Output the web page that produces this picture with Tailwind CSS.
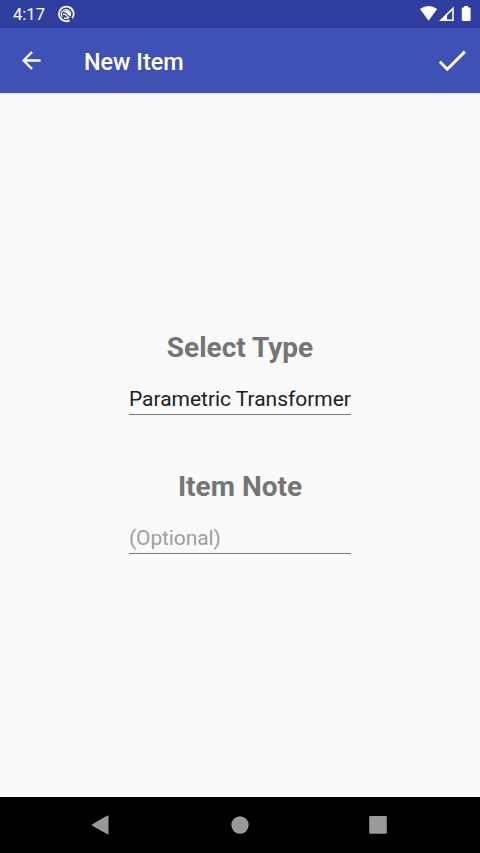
<!DOCTYPE html>
<html lang="en">
<head>
<meta charset="utf-8">
<title>New Item</title>
<script src="https://cdn.jsdelivr.net/npm/@tailwindcss/browser@4"></script>
</head>
<body class="flex h-[853px] w-[480px] flex-col overflow-hidden bg-[#fafafa] font-['Roboto',sans-serif]">
  <div class="flex h-7 shrink-0 items-center bg-[#303f9f] pl-[13px] text-white">
    <span class="w-[44px] pt-[2px] text-[16.6px] leading-7 whitespace-nowrap">4:17</span>
    <svg class="h-[18px] w-[18px]" viewBox="0 0 18 18" fill="none" stroke="#fff">
      <path d="M15.2 13.2A7.3 7.3 0 1 0 12.6 15.4" stroke-width="1.8"/>
      <path d="M5.4 11.9A4.5 4.5 0 1 1 13 11.2" stroke-width="1.1"/>
      <path d="M6 7.2Q9.2 3.4 12.4 7.2Q14 9.3 12.7 11.4L9.6 8Q7.6 6.6 6 7.2Z" fill="#fff" stroke="none"/>
      <path d="M5.9 9.3L8 9.1L11.6 12.6Q9.4 14 6.9 12.8" stroke-width="1.3"/>
    </svg>
    <svg class="mr-[8px] ml-auto h-7 w-[54px]" viewBox="418 0 54 28" fill="#fff">
      <path d="M420 9.1Q428.6 3.1 437.2 9.1L428.6 20.7Z"/>
      <path fill-rule="evenodd" d="M439 21L453.7 6.5V21ZM447 19.4H452.2V10.4L447 15.6Z"/>
      <path d="M461.8 8.5Q461.8 7.6 462.7 7.6H464.2V6H468V7.6H469.8Q470.6 7.6 470.6 8.5V20Q470.6 21 469.8 21H462.7Q461.8 21 461.8 20Z"/>
    </svg>
  </div>
  <header class="flex h-[66px] shrink-0 items-center border-b border-[#d8dbf0] bg-[#3f51b5] text-white">
    <svg class="ml-[17px] h-7 w-7" viewBox="-0.2 0.4 24 24" fill="#fff"><path d="M20 11H7.83l5.59-5.59L12 4l-8 8 8 8 1.41-1.41L7.83 13H20v-2z"/></svg>
    <h1 class="ml-[39px] pt-[2px] text-[23.4px] leading-7 font-medium">New Item</h1>
    <svg class="mr-[11px] ml-auto h-7 w-8" viewBox="437 47 32 28" fill="none" stroke="#fff" stroke-width="2.9"><path d="M439.9 61.8L447.3 69.2L464.9 51.6"/></svg>
  </header>
  <main class="flex flex-1 flex-col items-center pt-[237px]">
    <h2 class="text-[28px] leading-[34px] font-bold text-[#757575]">Select Type</h2>
    <div class="mt-[20px] h-[30px] w-[222px] border-b border-[#757575] pt-px text-[21px] leading-[26px] tracking-[-0.03px] whitespace-nowrap text-[#212121]">Parametric Transformer</div>
    <h2 class="mt-[55px] text-[28px] leading-[34px] font-bold text-[#757575]">Item Note</h2>
    <input type="text" placeholder="(Optional)" aria-label="Item Note" class="mt-[20px] h-[30px] w-[222px] border-b border-[#757575] pb-px text-[21px] leading-[26px] tracking-[-0.12px] text-[#212121] outline-none placeholder:text-[#9e9e9e]">
  </main>
  <nav class="h-14 shrink-0 bg-black">
    <svg class="block h-14 w-[480px]" viewBox="0 797 480 56" fill="#999">
      <path d="M92.3 824.2L107 815.7Q108.5 815 108.5 816.5V833.4Q108.5 834.9 107 834.1L92.3 825.7Q91.4 825 92.3 824.2Z"/>
      <circle cx="240" cy="825" r="8.7"/>
      <rect x="369.2" y="816" width="17.6" height="17.8" rx="1.2"/>
    </svg>
  </nav>
</body>
</html>
